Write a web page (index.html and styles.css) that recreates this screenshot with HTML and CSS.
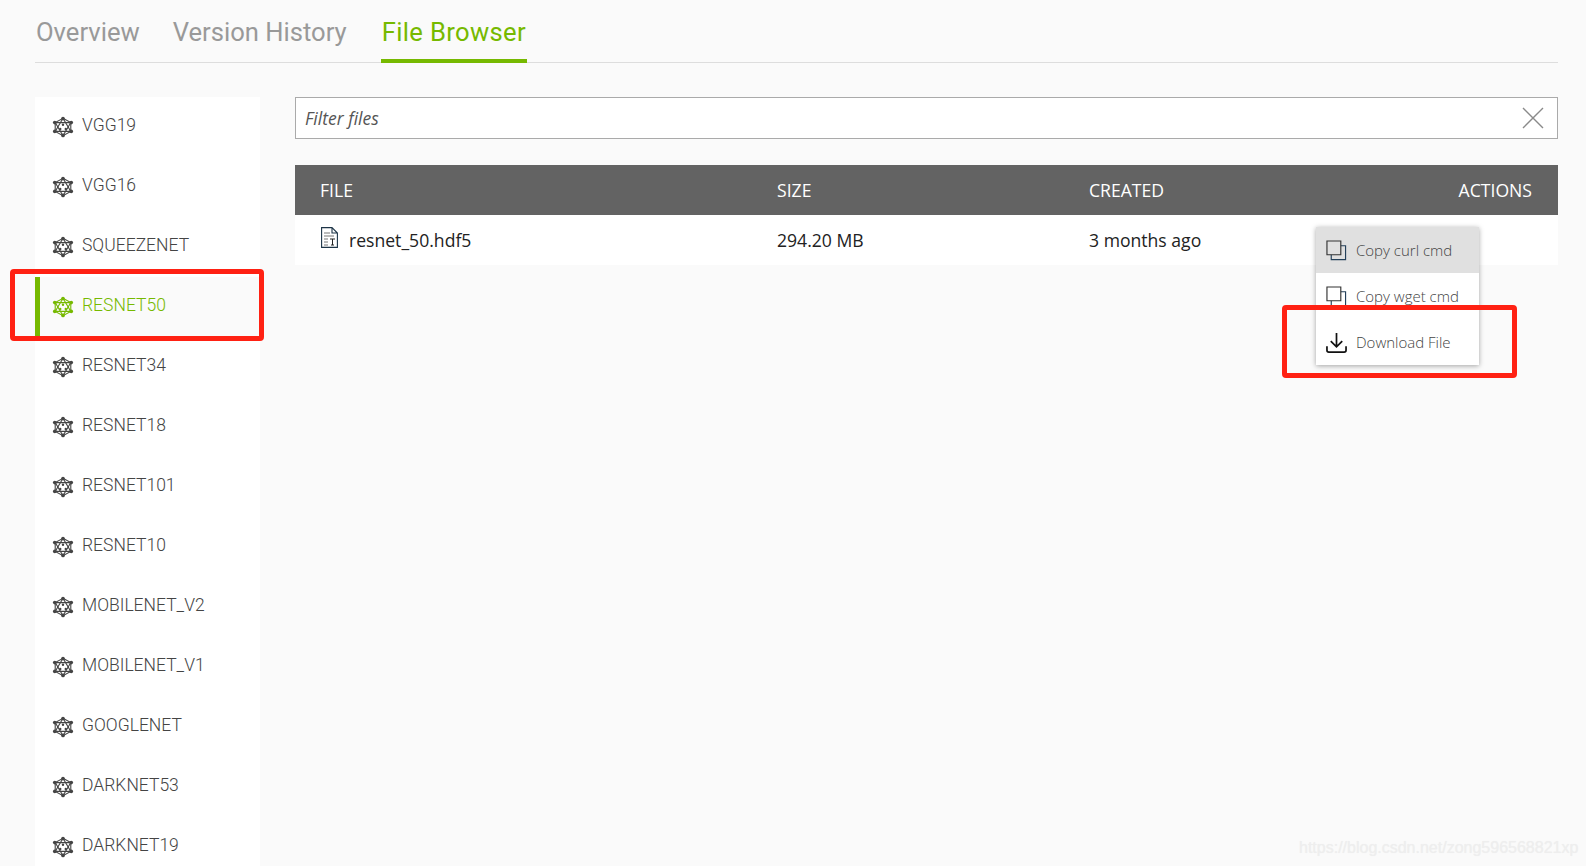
FILE: index.html
```html
<!DOCTYPE html>
<html lang="en">
<head>
    <meta charset="UTF-8">
    <meta name="viewport" content="width=device-width, initial-scale=1.0">
    <title>File Browser</title>
    <link rel="stylesheet" href="styles.css">
</head>
<body>
    <svg class="defs" width="0" height="0">
        <symbol id="net" viewBox="0 0 24 24">
            <g fill="none" stroke="currentColor" stroke-width="1.2">
                <path d="M12 2.5 20.5 7.2V16.8L12 21.5 3.5 16.8V7.2Z"/>
                <path d="M12 2.5 20.5 16.8H3.5Z"/>
                <path d="M12 21.5 3.5 7.2H20.5Z"/>
            </g>
            <g fill="currentColor">
                <circle cx="12" cy="2.8" r="2"/>
                <circle cx="12" cy="21.2" r="2"/>
                <circle cx="3" cy="7.2" r="2"/>
                <circle cx="21" cy="7.2" r="2"/>
                <circle cx="3" cy="16.8" r="2"/>
                <circle cx="21" cy="16.8" r="2"/>
                <circle cx="12" cy="9.5" r="1.3"/>
                <circle cx="9" cy="14.2" r="1.3"/>
                <circle cx="15" cy="14.2" r="1.3"/>
            </g>
        </symbol>
        <symbol id="copy" viewBox="0 0 22 22">
            <path d="M5.5 6H20.5V20.5H5.5Z" fill="none" stroke="#24405a" stroke-width="1.2"/>
            <path d="M1 1H15.5V15.5H1Z" fill="currentColor" stroke="#333" stroke-width="1.2"/>
        </symbol>
    </svg>

    <nav class="tabs">
        <a class="tab">Overview</a>
        <a class="tab">Version History</a>
        <a class="tab active">File Browser</a>
    </nav>

    <div class="content">
        <ul class="sidebar">
            <li><svg class="net"><use href="#net"/></svg>VGG19</li>
            <li><svg class="net"><use href="#net"/></svg>VGG16</li>
            <li><svg class="net"><use href="#net"/></svg>SQUEEZENET</li>
            <li class="active"><svg class="net"><use href="#net"/></svg>RESNET50</li>
            <li><svg class="net"><use href="#net"/></svg>RESNET34</li>
            <li><svg class="net"><use href="#net"/></svg>RESNET18</li>
            <li><svg class="net"><use href="#net"/></svg>RESNET101</li>
            <li><svg class="net"><use href="#net"/></svg>RESNET10</li>
            <li><svg class="net"><use href="#net"/></svg>MOBILENET_V2</li>
            <li><svg class="net"><use href="#net"/></svg>MOBILENET_V1</li>
            <li><svg class="net"><use href="#net"/></svg>GOOGLENET</li>
            <li><svg class="net"><use href="#net"/></svg>DARKNET53</li>
            <li><svg class="net"><use href="#net"/></svg>DARKNET19</li>
        </ul>

        <div class="main">
            <div class="filter">
                <span class="placeholder">Filter files</span>
                <svg class="clear" width="22" height="22" viewBox="0 0 22 22">
                    <path d="M1 1 21 21M21 1 1 21" stroke="#8a8a8a" stroke-width="1.4" fill="none"/>
                </svg>
            </div>

            <div class="table">
                <div class="thead">
                    <span class="col-file">FILE</span>
                    <span class="col-size">SIZE</span>
                    <span class="col-created">CREATED</span>
                    <span class="col-actions">ACTIONS</span>
                </div>
                <div class="row">
                    <span class="col-file">
                        <svg class="doc" width="17" height="21" viewBox="0 0 17 21">
                            <path d="M.6.6H11L16.4 6V20.4H.6Z M11 .6V6H16.4" fill="none" stroke="#1d3447" stroke-width="1.1"/>
                            <path d="M3 6H9M3 9H13M3 12H7M3 15H7M3 18H7" stroke="#777" stroke-width="1" fill="none"/>
                            <path d="M9 12H14M11.5 12V18M10 18H13" stroke="#222" stroke-width="1" fill="none"/>
                        </svg>
                        resnet_50.hdf5
                    </span>
                    <span class="col-size">294.20 MB</span>
                    <span class="col-created">3 months ago</span>

                    <div class="menu">
                        <div class="item hover"><svg class="copy"><use href="#copy"/></svg>Copy curl cmd</div>
                        <div class="item"><svg class="copy"><use href="#copy"/></svg>Copy wget cmd</div>
                        <div class="item">
                            <svg class="copy" viewBox="0 0 22 22">
                                <path d="M11 1V15M5 9.5 11 15.5 17 9.5M1 15V19Q1 21 3 21H19Q21 21 21 19V15" fill="none" stroke="#111" stroke-width="1.8"/>
                            </svg>
                            Download File
                        </div>
                    </div>
                </div>
            </div>
        </div>
    </div>

    <div class="mark mark-side"></div>
    <div class="mark mark-menu"></div>
    <div class="watermark">https://blog.csdn.net/zong596568821xp</div>
</body>
</html>
```

FILE: styles.css
```css
body {
    margin: 0;
    height: 100vh;
    overflow: hidden;
    background: #fafafa;
    font-family: "Open Sans", "Liberation Sans", sans-serif;
    color: #222;
}
.defs { position: absolute; }

.tabs {
    display: flex;
    gap: 31px;
    height: 63px;
    margin: 0 28px 0 35px;
    box-sizing: border-box;
    border-bottom: 1px solid #ddd;
}
.tab {
    padding: 0 1px;
    height: 63px;
    box-sizing: border-box;
    font: 400 25.6px/64px Roboto, sans-serif;
    color: #999;
}
.tab.active {
    margin-left: 2px;
    letter-spacing: .35px;
    color: #76b900;
    border-bottom: 4px solid #76b900;
}

.content {
    display: flex;
    gap: 35px;
    margin: 34px 28px 0 35px;
}
.sidebar {
    flex: 0 0 225px;
    margin: 0;
    padding: 0;
    list-style: none;
    background: #fff;
}
.sidebar li {
    display: flex;
    align-items: center;
    gap: 8px;
    height: 60px;
    box-sizing: border-box;
    padding: 0 0 4px 17px;
    font: 300 17.5px Roboto, sans-serif;
    color: #444;
}
.sidebar li.active {
    padding-left: 12px;
    border-left: 5px solid #76b900;
    background: #fafafa;
    color: #76b900;
}
.net {
    width: 22px;
    height: 22px;
    margin-top: 3px;
}

.main { flex: 1; }
.filter {
    display: flex;
    align-items: center;
    justify-content: space-between;
    height: 42px;
    box-sizing: border-box;
    padding: 0 13px 0 9px;
    background: #fff;
    border: 1px solid #aaa;
}
.placeholder {
    font-size: 17.5px;
    font-style: italic;
    color: #555;
}

.table { margin-top: 26px; }
.thead, .row {
    display: flex;
    align-items: center;
    height: 50px;
    padding: 0 25px;
    font-size: 17.6px;
}
.thead {
    background: #636363;
    color: #fff;
}
.row {
    position: relative;
    background: #fff;
}
.col-file {
    display: flex;
    align-items: center;
    gap: 11px;
    width: 457px;
}
.col-size { width: 312px; }
.col-created { flex: 1; }
.col-actions { margin-right: 1px; }
.doc {
    margin: -5px 0 0 1px;
}

.menu {
    position: absolute;
    top: 12px;
    left: 1021px;
    width: 163px;
    background: #fff;
    box-shadow: 0 1px 5px rgba(0, 0, 0, .35);
}
.item {
    display: flex;
    align-items: center;
    gap: 9px;
    height: 46px;
    padding-left: 10px;
    font-size: 15px;
    font-weight: 300;
    color: #444;
}
.item.hover { background: #e0e0e0; }
.copy {
    width: 21px;
    height: 21px;
    color: #fff;
}
.item.hover .copy { color: #e0e0e0; }

.mark {
    position: absolute;
    box-sizing: border-box;
    border: 5px solid #ff2113;
    border-radius: 4px;
}
.mark-side {
    top: 269px;
    left: 10px;
    width: 254px;
    height: 72px;
}
.mark-menu {
    top: 305px;
    left: 1282px;
    width: 235px;
    height: 73px;
}

.watermark {
    position: absolute;
    top: 839px;
    left: 1299px;
    font: 16px "Liberation Sans", sans-serif;
    color: #eee;
    text-shadow: 0 0 1px #eee;
}
```
